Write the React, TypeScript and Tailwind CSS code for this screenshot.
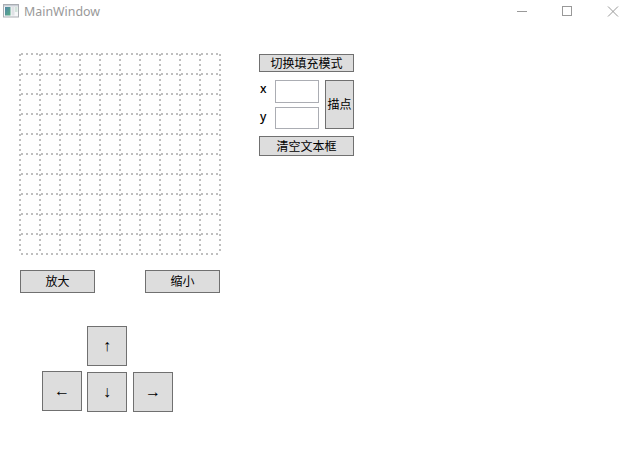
import type { ReactNode } from "react";

const LINES = Array.from({ length: 11 }, (_, i) => i * 20);

function Button({ className, children }: { className: string; children: ReactNode }) {
  return (
    <button
      className={`flex shrink-0 items-center justify-center whitespace-nowrap border border-[#707070] bg-[#dddddd] leading-none text-black ${className}`}
    >
      {children}
    </button>
  );
}

function TitleBar() {
  return (
    <header className="flex h-[31px] shrink-0 items-start justify-between pl-[3px]">
      <div className="flex items-start">
        <svg className="mt-1" width="16" height="14" viewBox="0 0 16 14">
          <defs>
            <linearGradient id="pane" x1="0" y1="0" x2="1" y2="1">
              <stop offset="0" stopColor="#5286a8" />
              <stop offset="1" stopColor="#58ad83" />
            </linearGradient>
          </defs>
          <rect x="0.5" y="0.5" width="15" height="12.5" fill="#f7f8f9" stroke="#a9adb2" />
          <rect x="1" y="1" width="14" height="1.5" fill="#c9ced6" />
          <rect x="2" y="3" width="5.5" height="8.5" fill="url(#pane)" />
          <rect x="8.5" y="3" width="3" height="8.5" fill="#e0e2e6" />
          <rect x="12" y="3" width="2.5" height="5" fill="#d3e4dc" />
        </svg>
        <span className="mt-[3px] ml-[5px] font-['Noto_Sans',sans-serif] text-[12.4px] leading-[18px] text-[#999999]">
          MainWindow
        </span>
      </div>
      <svg width="112" height="22" viewBox="0 0 112 22" fill="none" stroke="#999999">
        <path d="M0 11.5h10" />
        <rect x="45.5" y="6.5" width="9" height="9" />
        <path d="M91 6.5l10 10M101 6.5l-10 10" />
      </svg>
    </header>
  );
}

function Grid() {
  return (
    <svg className="ml-[18px] block" width="204" height="204" viewBox="-2 -2 204 204">
      <g stroke="#000000" strokeOpacity="0.25" strokeWidth="2" strokeDasharray="2 3">
        {LINES.map((p) => (
          <line key={`h${p}`} x1="1" y1={p} x2="200" y2={p} />
        ))}
        {LINES.map((p) => (
          <line key={`v${p}`} x1={p} y1="0" x2={p} y2="200" />
        ))}
      </g>
    </svg>
  );
}

export default function App() {
  return (
    <div className="flex h-[454px] w-[629px] flex-col overflow-hidden bg-white font-['Noto_Sans','Noto_Sans_CJK_SC',sans-serif] text-[12px] text-black">
      <TitleBar />
      <main className="flex">
        <section className="w-[259px] pt-[21px]">
          <Grid />
          <div className="mt-[14px] ml-5 flex w-[200px] justify-between">
            <Button className="h-[23px] w-[75px]">放大</Button>
            <Button className="h-[23px] w-[75px]">缩小</Button>
          </div>
          <div className="mt-[33px] ml-[42px] w-[131px] font-['Liberation_Sans',sans-serif] text-[16px]">
            <Button className="ml-[45px] size-10">↑</Button>
            <div className="mt-[5px] flex">
              <Button className="size-10">←</Button>
              <Button className="mt-px ml-[5px] size-10">↓</Button>
              <Button className="mt-px ml-1.5 size-10">→</Button>
            </div>
          </div>
        </section>
        <section className="w-[95px] pt-[23px]">
          <Button className="h-[18px] w-full pt-0.5">切换填充模式</Button>
          <div className="mt-2 flex justify-between">
            <div className="flex w-[60px] flex-col gap-1">
              <label className="flex h-[23px] justify-between">
                <span className="pl-px leading-[18px] font-medium">x</span>
                <input className="h-[23px] w-11 border border-[#abadb3] bg-white" />
              </label>
              <label className="flex h-[22px] justify-between">
                <span className="pl-px leading-[20px] font-medium">y</span>
                <input className="h-[22px] w-11 border border-[#abadb3] bg-white" />
              </label>
            </div>
            <Button className="h-[49px] w-[29px]">描点</Button>
          </div>
          <Button className="mt-[7px] h-5 w-full pt-0.5">清空文本框</Button>
        </section>
      </main>
    </div>
  );
}
